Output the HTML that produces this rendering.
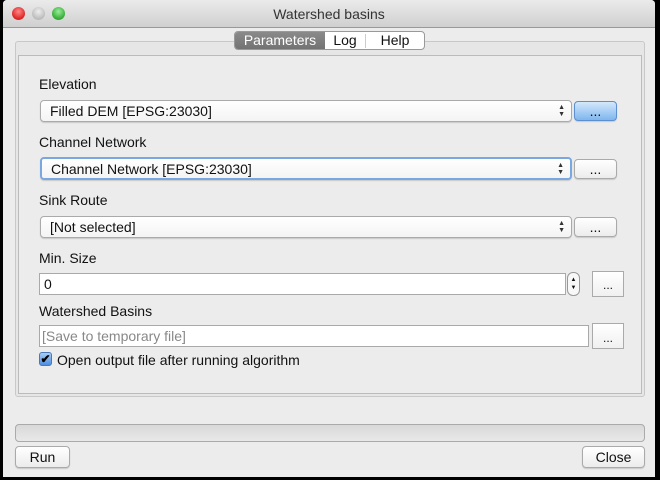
<!DOCTYPE html>
<html><head><style>
*{box-sizing:border-box;margin:0;padding:0}
body{width:660px;height:480px;background:#000;font-family:"Liberation Sans",sans-serif;font-size:14px;color:#111;position:relative;overflow:hidden}
.win{position:absolute;left:3px;top:0;width:652px;height:477px;background:#ececec;border-radius:4px 4px 0 0;overflow:hidden}
.title{position:absolute;left:0;top:0;width:652px;height:28px;background:linear-gradient(#ebebeb,#d0d0d0);border-bottom:1px solid #999;text-align:center;line-height:29px;font-size:14px;color:#333}
.dot{position:absolute;top:7px;width:13px;height:13px;border-radius:50%}
.a{position:absolute}
.box{border:1px solid #c8c8c8;border-radius:3px}
.field{background:#fff;border:1px solid #a9a9a9;padding-left:7px;line-height:20px}
.combo{background:linear-gradient(#fff,#f4f4f4);border:1px solid #aaa;border-radius:4px;padding-left:9px;line-height:20px;box-shadow:0 1px 1px rgba(0,0,0,.15)}
.arr{position:absolute;right:6px;top:3px;font-size:7px;line-height:7px;color:#333}
.btn{background:linear-gradient(#fff,#ececec);border:1px solid #aaa;border-radius:4px;text-align:center;line-height:18px;box-shadow:0 1px 1px rgba(0,0,0,.15)}
.sq{background:linear-gradient(#fff,#f0f0f0);border:1px solid #aaa;text-align:center;line-height:22px;font-size:12px}
</style></head><body>
<div class="win">
<div class="title">Watershed basins
<div class="dot" style="left:9px;background:radial-gradient(circle at 50% 35%,#f88,#d22 70%)"></div>
<div class="dot" style="left:29px;background:radial-gradient(circle at 50% 35%,#eee,#bbb 70%)"></div>
<div class="dot" style="left:49px;background:radial-gradient(circle at 50% 35%,#9e9,#3a3 70%)"></div>
</div>
<div class="a box" style="left:12px;top:41px;width:630px;height:356px;background:#e6e6e6"></div>
<div class="a" style="left:15px;top:55px;width:624px;height:339px;border:1px solid #bbb;background:#ececec"></div>
<div class="a" style="left:231px;top:31px;width:191px;height:19px;border:1px solid #999;border-radius:4px;background:#fff;overflow:hidden;font-size:14px;line-height:17px">
<span class="a" style="left:0;top:0;width:90px;height:19px;background:linear-gradient(#8a8a8a,#707070);color:#fff;text-align:center">Parameters</span>
<span class="a" style="left:90px;top:0;width:40px;text-align:center">Log</span>
<span class="a" style="left:130px;top:2px;width:1px;height:14px;background:#ccc"></span>
<span class="a" style="left:130px;top:0;width:60px;text-align:center">Help</span>
</div>
<div class="a" style="left:36px;top:76px">Elevation</div>
<div class="a combo" style="left:37px;top:100px;width:532px;height:22px">Filled DEM [EPSG:23030]<span class="arr">▲<br>▼</span></div>
<div class="a btn" style="left:571px;top:101px;width:43px;height:20px;background:linear-gradient(#d4e8fb,#7fb6ee);border-color:#5b8fd0">...</div>
<div class="a" style="left:36px;top:134px">Channel Network</div>
<div class="a combo" style="left:37px;top:157px;width:532px;height:23px;border:2px solid #7aa7e0">Channel Network [EPSG:23030]<span class="arr">▲<br>▼</span></div>
<div class="a btn" style="left:571px;top:159px;width:43px;height:20px">...</div>
<div class="a" style="left:36px;top:192px">Sink Route</div>
<div class="a combo" style="left:37px;top:216px;width:532px;height:22px">[Not selected]<span class="arr">▲<br>▼</span></div>
<div class="a btn" style="left:571px;top:217px;width:43px;height:20px">...</div>
<div class="a" style="left:36px;top:250px">Min. Size</div>
<div class="a field" style="left:36px;top:273px;width:527px;height:22px;padding-left:4px">0</div>
<div class="a" style="left:564px;top:272px;width:13px;height:24px;border:1px solid #999;border-radius:6px;background:#f8f8f8;font-size:6px;line-height:8px;text-align:center;padding-top:3px">▲<br>▼</div>
<div class="a sq" style="left:589px;top:271px;width:32px;height:26px;line-height:26px">...</div>
<div class="a" style="left:36px;top:303px">Watershed Basins</div>
<div class="a field" style="left:36px;top:325px;width:550px;height:22px;padding-left:2px;color:#888">[Save to temporary file]</div>
<div class="a sq" style="left:589px;top:323px;width:32px;height:26px;line-height:28px">...</div>
<div class="a" style="left:36px;top:352px;width:13px;height:14px;border:1px solid #4a78b8;border-radius:3px;background:linear-gradient(#a9cdf5,#4d8ee0);color:#000;font-size:12px;line-height:12px;text-align:center;font-weight:bold">✔</div>
<div class="a" style="left:54px;top:352px">Open output file after running algorithm</div>
<div class="a" style="left:12px;top:424px;width:630px;height:18px;border:1px solid #aaa;border-radius:4px;background:linear-gradient(#d8d8d8,#e8e8e8)"></div>
<div class="a btn" style="left:12px;top:446px;width:55px;height:22px;line-height:20px;font-size:14px">Run</div>
<div class="a btn" style="left:579px;top:446px;width:63px;height:22px;line-height:20px;font-size:14px">Close</div>
</div>
</body></html>
